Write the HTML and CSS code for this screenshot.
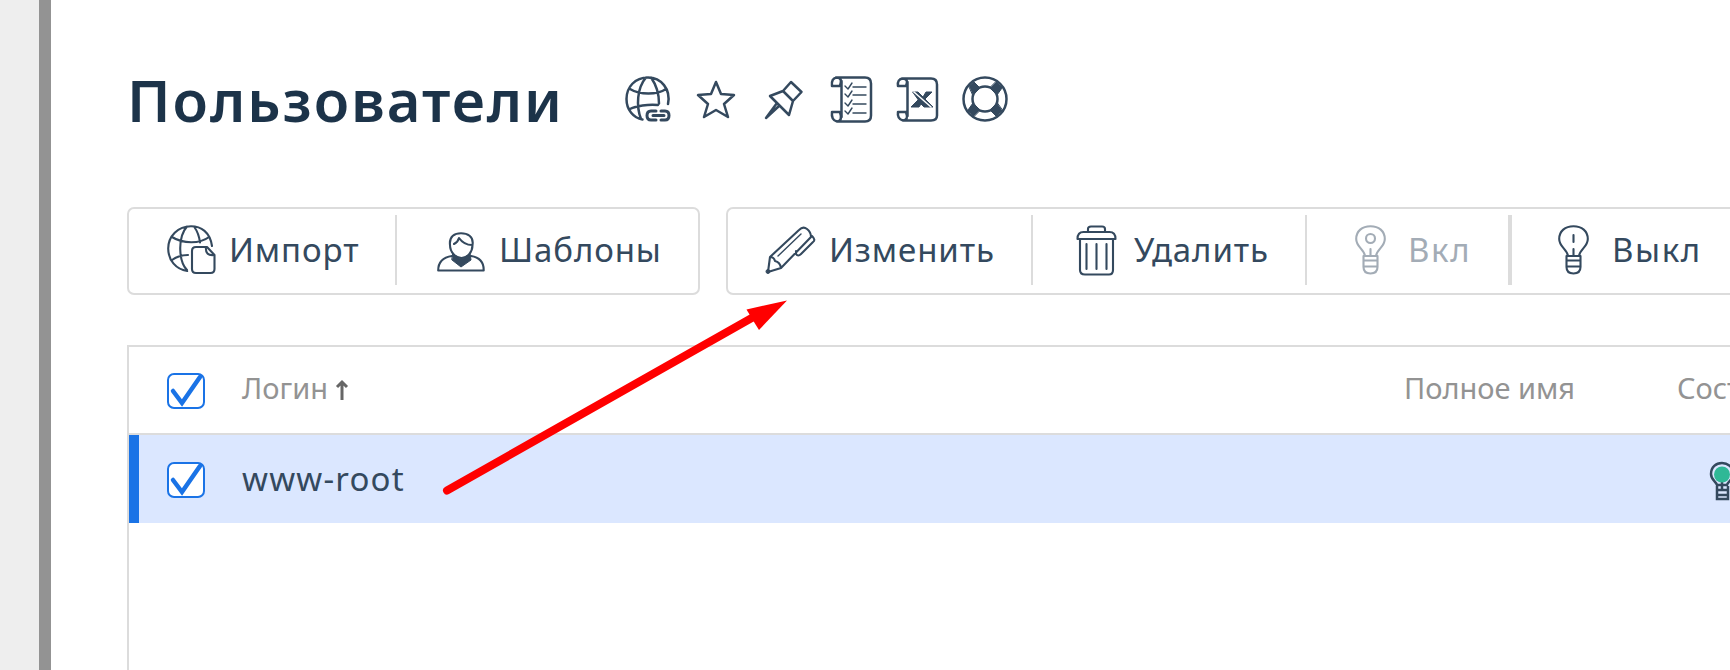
FILE: index.html
```html
<!DOCTYPE html>
<html lang="ru">
<head>
<meta charset="utf-8">
<title>Пользователи</title>
<link rel="stylesheet" href="styles.css">
</head>
<body>
<div class="app">
  <aside class="rail"></aside>
  <main class="content">
    <header class="head">
      <h1 class="title">Пользователи</h1>
      <div class="tools">
        <svg class="ico globe-link" width="46" height="46" viewBox="0 0 46 46"><path d="M43 28C46 13 36 1.500 23 1.500S1.500 11 1.500 23c0 11 7 19 16 20.500M16 43C11 30 12 12 21 1.500M26 1.500c5 7 8 16 8 26M5 13c10 6 27 6 36 0M5 33c6-3 18-5 28-4"/><path class="thick" d="M31 35h-5q-4 0-4 4.500t4 4.500h5M36 35h4q4 0 4 4.500t-4 4.500h-4M28 39.500h11"/></svg>
        <svg class="ico star" width="40" height="40" viewBox="0 0 40 40"><path d="M20 3l5 12 13 1-10 9 4 13-12-7-12 7 4-13L2 16l13-1z"/></svg>
        <svg class="ico pin" width="40" height="42" viewBox="0 0 40 42"><path d="M27 3L37.500 13 29 22 25 36 6 17 19 12zM19 12l10 10M15 27L2 39l11-15"/></svg>
        <svg class="ico scroll" width="43" height="47" viewBox="0 0 43 47"><path d="M6 1.500h29q6 0 6 6v32q0 6-6 6H7M2 10h8q3-8-3-8.500Q1 2 2 10zM2 36h8q3 9-3 9.500Q1 44 2 36z"/><path d="M11.500 5v36"/><path class="thin" d="M15 10l3 3 4-6M15 18l3 3 4-6M15 27l3 3 4-6M15 35l3 3 4-6M23 11h13M23 19h13M23 28h13M23 37h13"/></svg>
        <svg class="ico scroll-x" width="43" height="47" viewBox="0 0 43 47"><path d="M6 2.500h29q6 0 6 6v31q0 5-6 5H7M11.500 6v34M2 10h8q3-7-3-7.500Q1 3 2 10zM2 36h8q3 8-3 8.500Q1 43 2 36z"/><path class="solid" d="M17 16h5l5 5 3-5h6l-7 7 8 8h-9l-3-3-2 3h-8l7-7z"/><path class="cut" d="M18 16l17 15"/></svg>
        <svg class="ico buoy" width="48" height="48" viewBox="0 0 48 48"><circle cx="24" cy="24" r="21.500"/><circle cx="24" cy="24" r="12.500"/><path class="solid" d="M8 11l5-4 6 6-7 7zM35 7l6 6-5 7-7-7zM41 35l-6 6-6-6 7-7zM13 41l-6-6 5-7 7 7z"/></svg>
      </div>
    </header>

    <nav class="toolbar">
      <div class="group">
        <button class="btn import">
          <svg class="ico" width="49" height="50" viewBox="0 0 49 50"><path d="M45 21C43 7 34 1.200 24 1.200 11 1.200 1.200 11 1.200 23.500c0 12 8 21 19 22.500M20 45C12 37 10 13 20 1.500M27 1.500q5 7 6 16M5 12c11 7 28 7 37 0M5 35q7-5 16-5"/><path class="solid-white" d="M29 22h11l7.500 8v14q0 4-4 4H29q-4 0-4-4V26q0-4 4-4z"/><path d="M39 22q-1 9 8 8"/></svg>
          <span class="label">Импорт</span>
        </button>
        <i class="sep"></i>
        <button class="btn templates">
          <svg class="ico" width="48" height="40" viewBox="0 0 48 40"><path d="M13 13C12 4 18 1.200 24 1.200S37 4 35.500 13c0 7-5 13-11 13S13 20 13 13zM17 12q4-2 5-6 5 7 13 7M15 24Q1.200 26 1.200 38.500h45.500Q47 26 34 24"/><path class="solid" d="M16 21q8 11 17 0l1 7-10 7-9-7z"/></svg>
          <span class="label">Шаблоны</span>
        </button>
      </div>
      <div class="group actions">
        <button class="btn edit">
          <svg class="ico" width="51" height="49" viewBox="0 0 51 49"><path d="M5 31L34 4q4-4 8-1 4 3 4 8L16 42 3 46zM5 31q4 0 5 4 5 1 6 7M47 10q4 4 1 6L36 28q-3 3-5 0v-3"/><path class="thin" d="M13 30L36 8"/><circle class="solid" cx="3" cy="45.500" r="2"/></svg>
          <span class="label">Изменить</span>
        </button>
        <i class="sep"></i>
        <button class="btn delete">
          <svg class="ico" width="41" height="51" viewBox="0 0 41 51"><path d="M12 7V4q0-2.500 3-2.500h11q3 0 3 2.500v3M1.500 14q0-7 6-7h26q6 0 6 7zM4 15v30q0 4.500 5 4.500h24q4 0 4-4.500V15"/><path d="M10.500 19v25M20.500 19v25M30.500 19v25"/></svg>
          <span class="label">Удалить</span>
        </button>
        <i class="sep"></i>
        <button class="btn on" disabled>
          <svg class="ico" width="31" height="50" viewBox="0 0 31 50"><path d="M10 31C9 24 1.200 22 1.200 14c0-8 6-12.800 14.300-12.800S29.800 6 29.800 14c0 8-7.800 10-8.800 17zM8.500 31v11q0 6.500 7 6.500t7-6.500V31M9 35.500h13M9 41.500h13M15.500 24v6"/><circle cx="15.500" cy="13.500" r="4.500"/></svg>
          <span class="label">Вкл</span>
        </button>
        <i class="sep wide"></i>
        <button class="btn off">
          <svg class="ico" width="31" height="50" viewBox="0 0 31 50"><path d="M10 31C9 24 1.200 22 1.200 14c0-8 6-12.800 14.300-12.800S29.800 6 29.800 14c0 8-7.800 10-8.800 17zM8.500 31v11q0 6.500 7 6.500t7-6.500V31M9 35.500h13M9 41.500h13M15.500 24v6M15.500 10v7"/></svg>
          <span class="label">Выкл</span>
        </button>
      </div>
    </nav>

    <section class="table">
      <div class="row header">
        <span class="check"><svg width="38" height="36" viewBox="0 0 38 36"><path d="M6 18l9 12L33 4"/></svg></span>
        <span class="cell login">Логин</span>
        <svg class="sort" width="12" height="21" viewBox="0 0 12 21"><path d="M6 20V3M1 7l5-5 5 5"/></svg>
        <span class="cell fullname">Полное имя</span>
        <span class="cell state">Сост</span>
      </div>
      <div class="row selected">
        <span class="check"><svg width="38" height="36" viewBox="0 0 38 36"><path d="M6 18l9 12L33 4"/></svg></span>
        <span class="cell name">www-root</span>
        <svg class="bulb" width="24" height="39" viewBox="0 0 24 39"><path d="M7 23C6 19 1 18 1 12 1 5 6 1 12 1s11 4 11 11c0 6-5 7-6 11zM7 24v13h11V24M7 28h11M7 33h11M12 20v7"/><circle class="lamp" cx="12" cy="12.500" r="8"/></svg>
      </div>
    </section>
  </main>
  <svg class="pointer" width="346" height="200" viewBox="0 0 346 200"><path class="shaft" d="M6 194.500L316 19"/><path class="tip" d="M346 4.500L305.500 13.500 310 21 313 26 318 34z"/></svg>
</div>
</body>
</html>
```
FILE: styles.css
```css
* { box-sizing: border-box; }
body { margin: 0; background: #fff; overflow: hidden; font-family: "Noto Sans", sans-serif; }
.app { position: relative; display: flex; width: 1730px; height: 670px; overflow: hidden; }
.rail { flex: none; width: 51px; background: #eee; border-right: 12px solid #939393; }
.content { flex: none; display: flex; flex-direction: column; width: 1679px; padding-left: 76px; overflow: hidden; }

svg { flex: none; display: block; overflow: visible; fill: none; }
.ico { stroke: #34495e; stroke-width: 2.1; stroke-linejoin: round; stroke-linecap: round; }
.tools .ico { stroke-width: 2.5; }
.ico .thick { stroke-width: 3; }
.ico .thin { stroke-width: 1.4; }
.ico .solid { fill: #34495e; stroke-width: 1; }
.ico .cut { stroke: #fff; stroke-width: 1.5; }
.ico .solid-white { fill: #fff; }

.head { flex: none; display: flex; height: 207px; }
.title { flex: none; width: 497px; margin: 60px 0 0; font-size: 58px; font-weight: 600; line-height: 80px; letter-spacing: 1.95px; color: #1c3349; white-space: nowrap; }
.tools { display: flex; align-items: flex-start; padding-top: 76px; }
.globe-link { margin-left: 1px; }
.star { margin: 3px 0 0 25px; }
.pin { margin: 3px 0 0 28px; }
.scroll { margin-left: 26px; }
.scroll-x { margin-left: 23px; }
.buoy { margin-left: 22px; margin-top: -1px; }

.toolbar { flex: none; display: flex; gap: 26px; height: 88px; }
.group { flex: none; display: flex; align-items: center; width: 573px; padding-bottom: 2px; border: 2px solid #dcdcdc; border-radius: 7px; }
.actions { width: 1100px; }
.btn { flex: none; display: flex; align-items: center; height: 82px; padding: 0; border: 0; background: none; font: 33px/48px "Noto Sans", sans-serif; letter-spacing: .9px; color: #34495e; text-align: left; }
.sep { flex: none; width: 2px; height: 70px; background: #dcdcdc; }
.sep.wide { width: 4px; }
.label { white-space: nowrap; }
.import { width: 266px; padding-left: 38px; gap: 13px; }
.templates { padding-left: 40px; gap: 14px; }
.templates .ico { margin-top: 3px; }
.edit { width: 303px; padding-left: 37px; gap: 13px; }
.delete { width: 272px; padding-left: 43px; gap: 17px; }
.on { width: 201px; padding-left: 48px; gap: 22px; opacity: .45; }
.off { padding-left: 46px; gap: 23px; }
.on, .off { letter-spacing: 1.6px; }

.table { flex: none; width: 1610px; height: 330px; margin-top: 50px; border-left: 2px solid #dcdcdc; border-top: 2px solid #dcdcdc; }
.row { display: flex; align-items: center; height: 88px; }
.header { border-bottom: 2px solid #dcdcdc; padding-left: 38px; color: #939393; font-size: 29px; }
.header .cell { padding-bottom: 5px; }
.selected { border-left: 10px solid #1a73e6; padding-left: 28px; background: #dbe7ff; color: #34495e; font-size: 33px; letter-spacing: 1.2px; }
.check { flex: none; width: 38px; height: 36px; margin-top: 2px; border: 2px solid #1a73e6; border-radius: 7px; background: #fff; }
.check svg { margin: -2px; stroke: #1a73e6; stroke-width: 4.5; stroke-linecap: round; stroke-linejoin: miter; }
.cell { flex: none; white-space: nowrap; line-height: 44px; }
.login { width: 94px; margin-left: 37px; }
.sort { stroke: #666; stroke-width: 3; }
.fullname { width: 273px; margin-left: 1056px; }
.name { width: 1468px; margin-left: 37px; }
.bulb { margin-top: 5px; stroke: #34495e; stroke-width: 2.5; }
.lamp { fill: #2fb896; stroke: none; }

.pointer { position: absolute; left: 441px; top: 296px; }
.shaft { stroke: #f00; stroke-width: 8; stroke-linecap: round; }
.tip { fill: #f00; }
```
